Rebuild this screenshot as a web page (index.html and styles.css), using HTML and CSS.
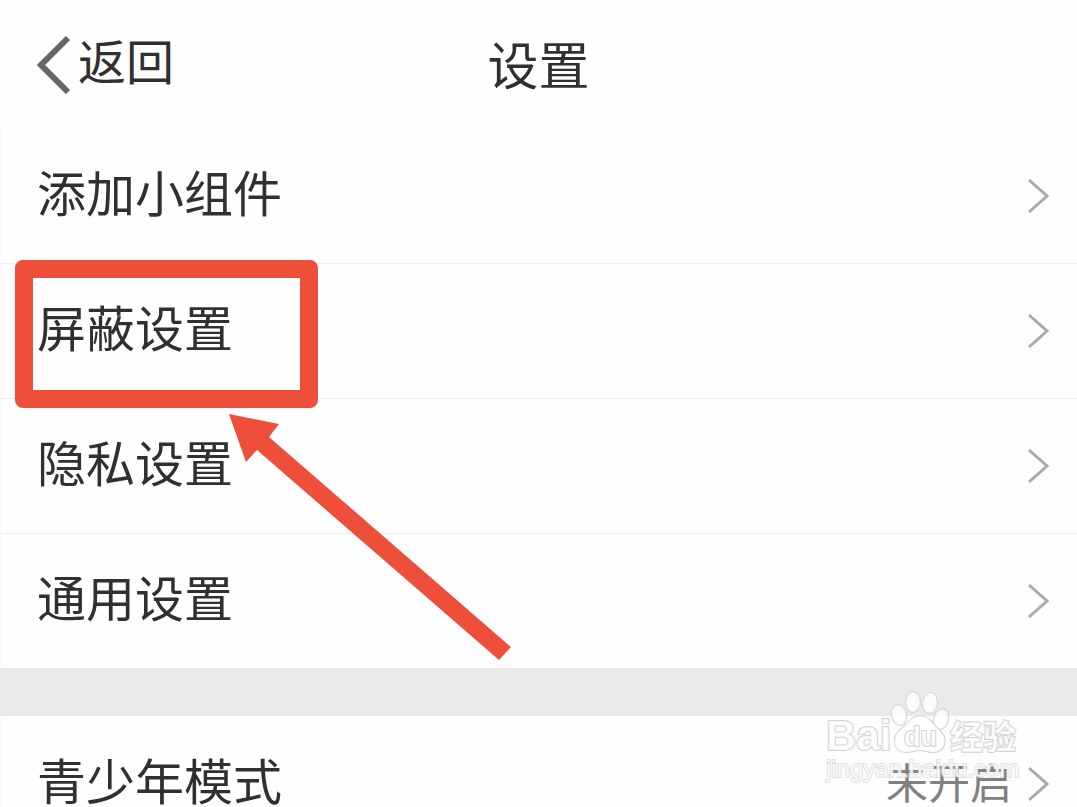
FILE: index.html
```
<!DOCTYPE html>
<html lang="zh-CN">
<head>
    <meta charset="UTF-8">
    <meta name="viewport" content="width=device-width, initial-scale=1.0">
    <title>设置</title>
    <link rel="stylesheet" href="styles.css">
</head>
<body>

<header class="header">
    <a class="back" href="#">
        <svg class="back-icon" width="36" height="60" viewBox="0 0 36 60" aria-hidden="true">
            <path d="M32 4 L5 31 L32 58" fill="none" stroke="#666" stroke-width="6"/>
        </svg>
        <span class="back-text">返回</span>
    </a>
    <h1>设置</h1>
</header>

<main>
    <ul class="list">
        <li><a class="row" href="#">
            <span class="label">添加小组件</span>
            <svg class="arrow" viewBox="0 0 24 36" aria-hidden="true"><path d="M3 2 L21 18 L3 34"/></svg>
        </a></li>
        <li class="marked"><a class="row" href="#">
            <span class="label">屏蔽设置</span>
            <svg class="arrow" viewBox="0 0 24 36" aria-hidden="true"><path d="M3 2 L21 18 L3 34"/></svg>
        </a>
            <div class="mark-box"></div>
            <svg class="mark-arrow" width="290" height="250" viewBox="0 0 290 250" aria-hidden="true">
                <path d="M0 0 L50 10 L40 23 L282 233 L270 246 L28 36 L17 48 Z" fill="#ee4f3a"/>
            </svg>
        </li>
        <li><a class="row" href="#">
            <span class="label">隐私设置</span>
            <svg class="arrow" viewBox="0 0 24 36" aria-hidden="true"><path d="M3 2 L21 18 L3 34"/></svg>
        </a></li>
        <li><a class="row" href="#">
            <span class="label">通用设置</span>
            <svg class="arrow" viewBox="0 0 24 36" aria-hidden="true"><path d="M3 2 L21 18 L3 34"/></svg>
        </a></li>
    </ul>

    <ul class="list">
        <li><a class="row" href="#">
            <span class="label">青少年模式</span>
            <span class="value">未开启</span>
            <svg class="arrow" viewBox="0 0 24 36" aria-hidden="true"><path d="M3 2 L21 18 L3 34"/></svg>
        </a></li>
    </ul>
</main>

<svg class="watermark" width="200" height="100" viewBox="0 0 200 100">
    <g class="wm-shape">
        <ellipse cx="79" cy="26" rx="7" ry="10" transform="rotate(-12 79 26)"/>
        <ellipse cx="93" cy="13" rx="7" ry="10"/>
        <ellipse cx="110" cy="14" rx="7" ry="10" transform="rotate(8 110 14)"/>
        <ellipse cx="121" cy="30" rx="7" ry="10" transform="rotate(16 121 30)"/>
        <path d="M100 27 C109 27 113 35 119 41 C128 48 126 63 114 63 C107 63 104 61 100 61 C95 61 92 63 86 63 C73 63 72 49 79 42 C87 36 91 27 100 27 Z"/>
    </g>
    <text class="wm-logo" x="6" y="61" font-size="42">Bai</text>
    <text class="wm-logo" x="84" y="57" font-size="27">du</text>
    <text class="wm-cn" x="130" y="60" font-size="33">经验</text>
    <text class="wm-url" x="6" y="88" font-size="24">jingyan.baidu.com</text>
</svg>

</body>
</html>
```
FILE: styles.css
```
* {
    box-sizing: border-box;
}

body {
    margin: 0;
    height: 100vh;
    overflow: hidden;
    position: relative;
    background-color: #fefefe;
    color: #303030;
    font-family: "Noto Sans CJK SC", sans-serif;
}

a {
    color: inherit;
    text-decoration: none;
}

.header {
    display: grid;
    grid-template-columns: 1fr auto 1fr;
    align-items: center;
    height: 128px;
    padding: 0 36px;
}

.header h1 {
    margin: 0;
    padding-bottom: 2px;
    font-size: 51px;
    font-weight: 400;
    line-height: 72px;
}

.back {
    display: flex;
    align-items: center;
    gap: 6px;
    font-size: 48px;
    line-height: 72px;
}

.back-text {
    padding-bottom: 10px;
}

.list {
    list-style: none;
    margin: 0;
    padding: 0;
}

.list + .list {
    border-top: 48px solid #eaeaea;
}

.row {
    display: flex;
    align-items: center;
    gap: 14px;
    height: 135px;
    padding: 0 27px 0 36px;
    border-left: 1px solid #f8f8f8;
}

.list li + li .row {
    border-top: 1px solid #eee;
}

.label {
    flex: 1;
    padding-bottom: 10px;
    font-size: 49px;
    line-height: 72px;
}

.value {
    padding-bottom: 6px;
    color: #808080;
    font-size: 42px;
    line-height: 60px;
}

.arrow {
    width: 24px;
    height: 36px;
    fill: none;
    stroke: #aaa;
    stroke-width: 3;
}

/* red highlight over the second row */
.marked {
    position: relative;
}

.mark-box {
    position: absolute;
    top: -3px;
    left: 15px;
    width: 303px;
    height: 148px;
    border: 18px solid #ee4f3a;
    border-radius: 8px;
    pointer-events: none;
}

.mark-arrow {
    position: absolute;
    top: 151px;
    left: 229px;
    z-index: 1;
    pointer-events: none;
}

.watermark {
    position: absolute;
    right: 57px;
    bottom: 18px;
    pointer-events: none;
}

.wm-shape,
.wm-logo,
.wm-cn,
.wm-url {
    fill: #fff;
    fill-opacity: 0.8;
    stroke: #d4d4d4;
    stroke-width: 2;
    paint-order: stroke;
}

.wm-logo,
.wm-url {
    font-family: "Liberation Sans", sans-serif;
}

.wm-logo,
.wm-cn {
    font-weight: 700;
}

.wm-url {
    stroke-opacity: 0.7;
}
```
